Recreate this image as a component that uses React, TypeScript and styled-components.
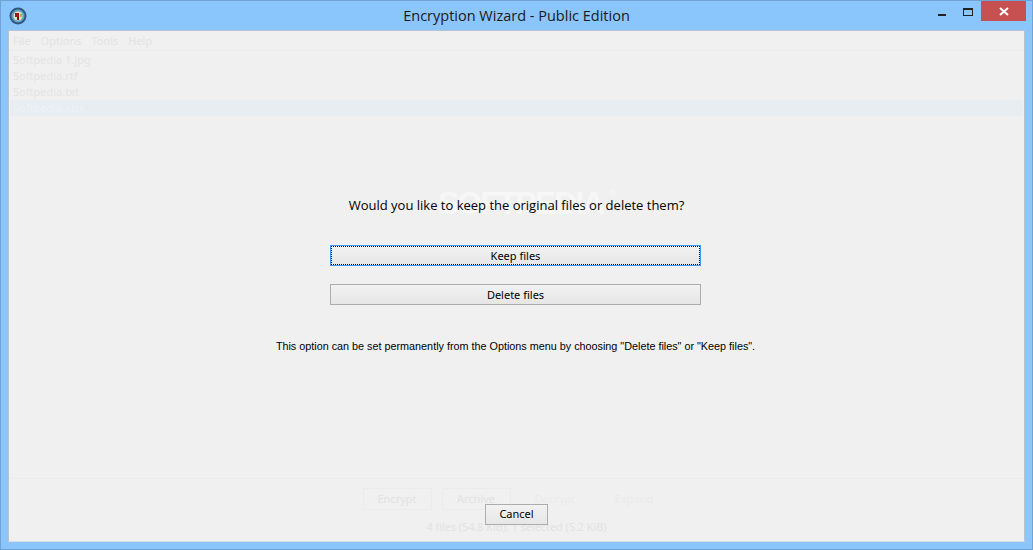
import { FC } from 'react';
import styled, { createGlobalStyle } from 'styled-components';

const GlobalStyle = createGlobalStyle`
    html, body {
        margin: 0;
        padding: 0;
        background: #8ac5fb;
    }
`;

const Window = styled.div`
    width: 1033px;
    height: 550px;
    box-sizing: border-box;
    display: flex;
    flex-direction: column;
    background: #8ac5fb;
    border: 1px solid #6fa3d6;
    padding: 0 7px 7px;
    font-family: 'Noto Sans', 'Liberation Sans', sans-serif;
    overflow: hidden;
`;

const TitleBar = styled.div`
    height: 29px;
    flex: none;
    display: flex;
    align-items: flex-start;
    position: relative;
    margin: 0 -7px;
    padding: 0 7px;
`;

const AppIcon = styled.svg`
    width: 18px;
    height: 18px;
    margin: 6px 0 0 1px;
`;

const Title = styled.div`
    position: absolute;
    left: 0;
    right: 0;
    top: 5px;
    text-align: center;
    font-family: 'Open Sans', sans-serif;
    font-size: 14.5px;
    line-height: 20px;
    color: #1a1a1a;
`;

const Controls = styled.div`
    margin-left: auto;
    margin-right: -7px;
    display: flex;
    align-items: flex-start;
`;

const ControlButton = styled.div<{ $close?: boolean }>`
    width: ${(props) => (props.$close ? '45px' : '26px')};
    height: 20px;
    background: ${(props) => (props.$close ? '#c75050' : 'transparent')};
    display: flex;
    align-items: center;
    justify-content: center;
    margin-right: ${(props) => (props.$close ? '6px' : '0')};
`;

const MinGlyph = styled.div`
    width: 8px;
    height: 2px;
    background: #222;
    margin-top: 8px;
`;

const MaxGlyph = styled.div`
    width: 8px;
    height: 5px;
    border: 1px solid #222;
    border-top-width: 2px;
    margin-top: 2px;
`;

const Content = styled.div`
    flex: 1;
    position: relative;
    display: flex;
    flex-direction: column;
    background: #f0f0f0;
    border: 1px solid #b5c4d2;
    border-bottom: 1px solid #d6dee6;
    min-height: 0;
`;

const MenuBar = styled.div`
    height: 20px;
    flex: none;
    display: flex;
    align-items: center;
    gap: 10px;
    padding: 0 0 1px 4px;
    box-sizing: border-box;
    font-size: 11px;
    color: #e3e3e3;
    border-bottom: 1px solid #ececec;
`;

const FileList = styled.div`
    display: flex;
    flex-direction: column;
    padding: 0 1px;
    margin-top: 1px;
`;

const FileRow = styled.div<{ $selected?: boolean }>`
    height: 16px;
    line-height: 16px;
    padding-left: 3px;
    font-size: 11px;
    color: ${(props) => (props.$selected ? '#eef3f7' : '#e4e4e4')};
    background: ${(props) => (props.$selected ? '#e7edf1' : 'transparent')};
`;

const Footer = styled.div`
    margin-top: auto;
    display: flex;
    flex-direction: column;
    align-items: center;
    padding-bottom: 7px;
    border-top: 1px solid #ececec;
`;

const ActionRow = styled.div`
    display: flex;
    align-items: center;
    gap: 10px;
    margin: 9px 2px 0 0;
`;

const FadedAction = styled.div<{ $outlined?: boolean }>`
    width: 69px;
    height: 22px;
    line-height: 20px;
    box-sizing: border-box;
    text-align: center;
    font-size: 11px;
    color: ${(props) => (props.$outlined ? '#e2e2e2' : '#ebebeb')};
    border: 1px solid ${(props) => (props.$outlined ? '#ebebeb' : 'transparent')};
`;

const Status = styled.div`
    font-size: 10.8px;
    line-height: 14px;
    margin-top: 10px;
    color: #e2e2e2;
`;

const Prompt = styled.div`
    position: absolute;
    inset: 0;
    display: flex;
    flex-direction: column;
    align-items: center;
    padding-top: 164px;
`;

const Watermark = styled.div`
    position: absolute;
    left: 429px;
    top: 152px;
    font-family: 'Liberation Sans', sans-serif;
    font-size: 32px;
    line-height: 40px;
    font-weight: bold;
    letter-spacing: -2px;
    color: #f7f7f7;
`;

const WatermarkMark = styled.span`
    font-size: 9px;
    line-height: 0;
    letter-spacing: 0;
    vertical-align: 18px;
    margin-left: 6px;
`;

const Question = styled.div`
    position: relative;
    font-family: 'Open Sans', sans-serif;
    font-size: 13px;
    line-height: 20px;
    color: #000;
`;

const WideButton = styled.button<{ $focused?: boolean }>`
    width: 371px;
    height: 21px;
    margin-right: 2px;
    padding: 0;
    font-family: 'Noto Sans', 'Liberation Sans', sans-serif;
    font-size: 11px;
    color: #000;
    background: linear-gradient(#f2f2f2, #e6e6e6);
    border: 1px solid ${(props) => (props.$focused ? '#3b99fc' : '#adadad')};
    outline: ${(props) => (props.$focused ? '1px dotted #111' : 'none')};
    outline-offset: -2px;
`;

const KeepButton = styled(WideButton)`
    margin-top: 30px;
`;

const DeleteButton = styled(WideButton)`
    margin-top: 18px;
`;

const Hint = styled.div`
    margin: 34px 2px 0 0;
    font-family: 'Liberation Sans', sans-serif;
    font-size: 10.8px;
    line-height: 14px;
    color: #000;
`;

const CancelButton = styled.button`
    position: absolute;
    left: 476px;
    top: 473px;
    width: 63px;
    height: 21px;
    padding: 0 0 2px;
    font-family: 'Noto Sans', 'Liberation Sans', sans-serif;
    font-size: 11px;
    color: #000;
    background: linear-gradient(#f2f2f2, #e6e6e6);
    border: 1px solid #adadad;
`;

const Emblem: FC = () => (
    <AppIcon viewBox="0 0 18 18">
        <circle cx="9" cy="9" r="7.5" fill="#5fa6c9" stroke="#33567f" strokeWidth="2" />
        <circle cx="9" cy="9" r="4.5" fill="#e6e2c4" />
        <rect x="6" y="6" width="4" height="4" fill="#a01818" />
        <rect x="8" y="10" width="2" height="3" fill="#7a1414" />
        <rect x="11" y="7" width="2" height="3" fill="#c9a24a" />
    </AppIcon>
);

const menu = ['File', 'Options', 'Tools', 'Help'];
const files = ['Softpedia 1.jpg', 'Softpedia.rtf', 'Softpedia.txt', 'Softpedia.xlsx'];
const actions = [
    { id: 1, label: 'Encrypt', outlined: true },
    { id: 2, label: 'Archive', outlined: true },
    { id: 3, label: 'Decrypt', outlined: false },
    { id: 4, label: 'Expand', outlined: false },
];

export default function App() {
    return (
        <>
            <GlobalStyle />
            <Window>
                <TitleBar>
                    <Emblem />
                    <Title>Encryption Wizard - Public Edition</Title>
                    <Controls>
                        <ControlButton>
                            <MinGlyph />
                        </ControlButton>
                        <ControlButton>
                            <MaxGlyph />
                        </ControlButton>
                        <ControlButton $close>
                            <svg width="10" height="9" viewBox="0 0 10 9">
                                <path d="M1 1 L9 8 M9 1 L1 8" stroke="#fff" strokeWidth="2" />
                            </svg>
                        </ControlButton>
                    </Controls>
                </TitleBar>
                <Content>
                    <MenuBar>
                        {menu.map((item) => (
                            <span key={item}>{item}</span>
                        ))}
                    </MenuBar>
                    <FileList>
                        {files.map((file, i) => (
                            <FileRow key={file} $selected={i === 3}>
                                {file}
                            </FileRow>
                        ))}
                    </FileList>
                    <Footer>
                        <ActionRow>
                            {actions.map((action) => (
                                <FadedAction key={action.id} $outlined={action.outlined}>
                                    {action.label}
                                </FadedAction>
                            ))}
                        </ActionRow>
                        <Status>4 files (54.8 KiB), 1 selected (5.2 KiB)</Status>
                    </Footer>
                    <Prompt>
                        <Watermark>
                            SOFTPEDIA<WatermarkMark>®</WatermarkMark>
                        </Watermark>
                        <Question>Would you like to keep the original files or delete them?</Question>
                        <KeepButton $focused>Keep files</KeepButton>
                        <DeleteButton>Delete files</DeleteButton>
                        <Hint>
                            This option can be set permanently from the Options menu by choosing
                            "Delete files" or "Keep files".
                        </Hint>
                    </Prompt>
                    <CancelButton>Cancel</CancelButton>
                </Content>
            </Window>
        </>
    );
}
